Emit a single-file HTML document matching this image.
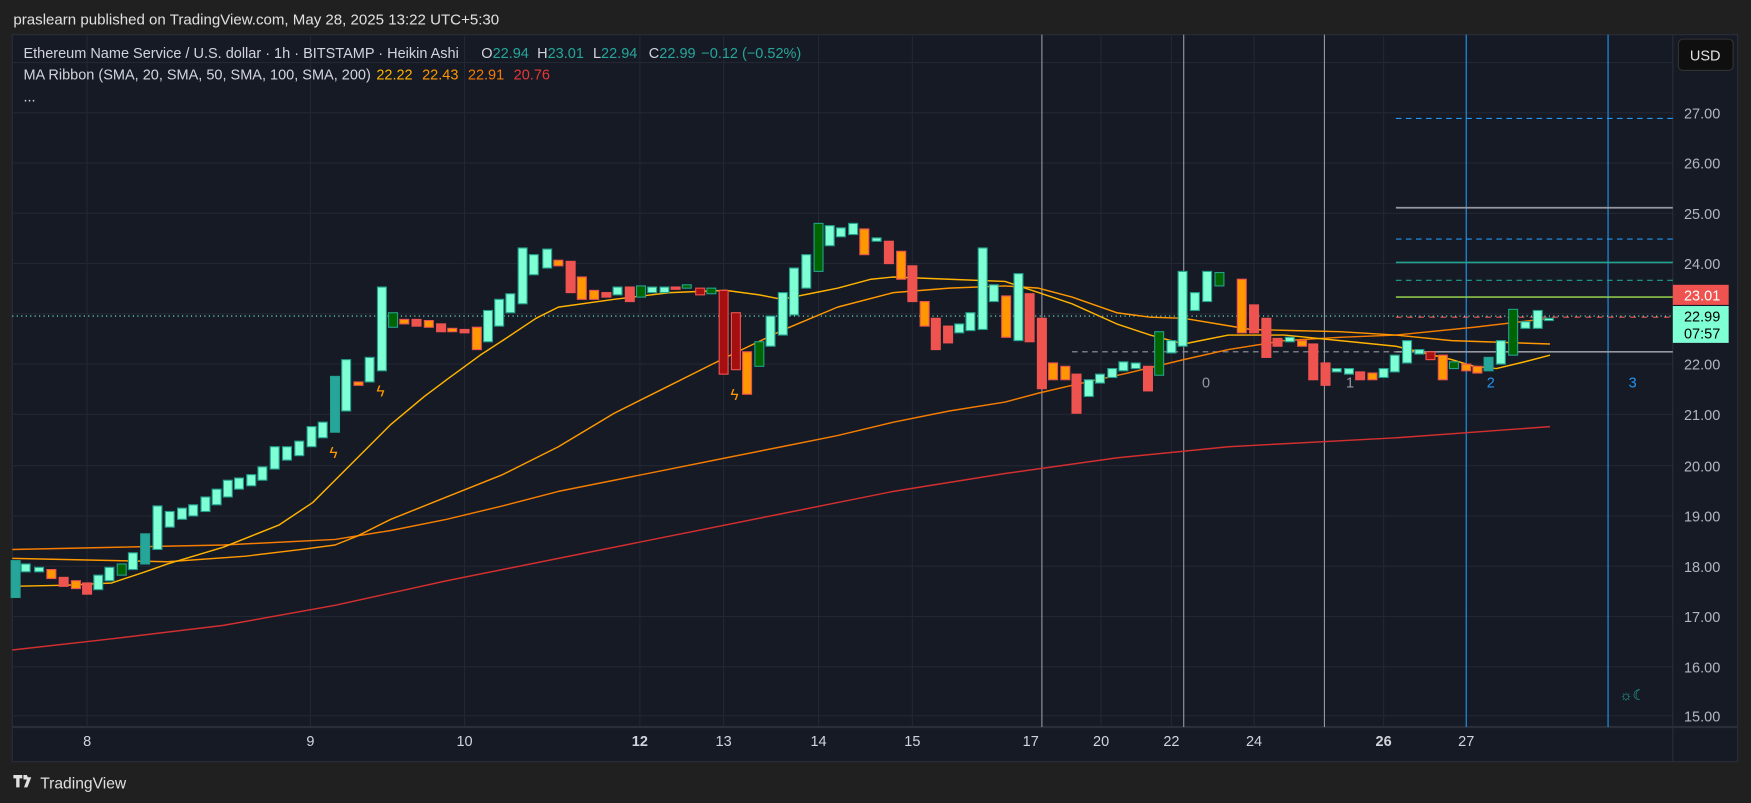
<!DOCTYPE html>
<html><head><meta charset="utf-8"><style>
html,body{margin:0;padding:0;background:#202020;width:1751px;height:803px;overflow:hidden}
svg{display:block}
text{font-family:"Liberation Sans",sans-serif}
.m{fill:#7fffd4;stroke:#22a08c}
.g{fill:#006400;stroke:#22a08c}
.t{fill:#26a69a;stroke:#22a08c}
.r{fill:#ef5350;stroke:#ef5350}
.d{fill:#a50f0f;stroke:#ef5350}
.o{fill:#ff9800;stroke:#ef5350}
rect.m,rect.g,rect.t,rect.r,rect.d,rect.o{stroke-width:1}
.ax{fill:#b2b5be;font-size:13px}
.tl{fill:#d1d4dc;font-size:13px;text-anchor:middle}
</style></head><body>
<svg width="1751" height="803" viewBox="0 0 1568 719" xmlns="http://www.w3.org/2000/svg">
<rect width="1568" height="719" fill="#202020"/>
<text x="12" y="22" fill="#e0e0e0" font-size="13.5">praslearn published on TradingView.com, May 28, 2025 13:22 UTC+5:30</text>
<rect x="11" y="31" width="1545" height="651" fill="#161a25" stroke="#2a2e39"/>
<g stroke="#232733" stroke-width="1">
<line x1="11" y1="56" x2="1498" y2="56"/><line x1="11" y1="101" x2="1498" y2="101"/><line x1="11" y1="146" x2="1498" y2="146"/><line x1="11" y1="191" x2="1498" y2="191"/><line x1="11" y1="236" x2="1498" y2="236"/><line x1="11" y1="281" x2="1498" y2="281"/><line x1="11" y1="326" x2="1498" y2="326"/><line x1="11" y1="371" x2="1498" y2="371"/><line x1="11" y1="417" x2="1498" y2="417"/><line x1="11" y1="462" x2="1498" y2="462"/><line x1="11" y1="507" x2="1498" y2="507"/><line x1="11" y1="552" x2="1498" y2="552"/><line x1="11" y1="597" x2="1498" y2="597"/><line x1="11" y1="641" x2="1498" y2="641"/>
<line x1="78" y1="31" x2="78" y2="651"/><line x1="278" y1="31" x2="278" y2="651"/><line x1="416" y1="31" x2="416" y2="651"/><line x1="573" y1="31" x2="573" y2="651"/><line x1="648" y1="31" x2="648" y2="651"/><line x1="733" y1="31" x2="733" y2="651"/><line x1="817" y1="31" x2="817" y2="651"/><line x1="986" y1="31" x2="986" y2="651"/><line x1="1049" y1="31" x2="1049" y2="651"/><line x1="1123" y1="31" x2="1123" y2="651"/><line x1="1239" y1="31" x2="1239" y2="651"/>
</g>
<line x1="11" y1="651" x2="1556" y2="651" stroke="#2a2e39" stroke-width="2"/>
<line x1="1498" y1="31" x2="1498" y2="682" stroke="#2a2e39"/>
<g stroke-width="1"><line x1="933" y1="31" x2="933" y2="651" stroke="#9598a1"/><line x1="1060" y1="31" x2="1060" y2="651" stroke="#9598a1"/><line x1="1186" y1="31" x2="1186" y2="651" stroke="#9598a1"/><line x1="1313" y1="31" x2="1313" y2="651" stroke="#2196f3"/><line x1="1440" y1="31" x2="1440" y2="651" stroke="#2196f3"/></g>
<text x="1080" y="347" fill="#9598a1" font-size="13" text-anchor="middle">0</text>
<text x="1209" y="347" fill="#9598a1" font-size="13" text-anchor="middle">1</text>
<text x="1335" y="347" fill="#2196f3" font-size="13" text-anchor="middle">2</text>
<text x="1462" y="347" fill="#2196f3" font-size="13" text-anchor="middle">3</text>
<line x1="1250" y1="106" x2="1498" y2="106" stroke="#2196f3" stroke-dasharray="5,4"/>
<line x1="1250" y1="186" x2="1498" y2="186" stroke="#9598a1" stroke-width="1.5"/>
<line x1="1250" y1="214" x2="1498" y2="214" stroke="#2196f3" stroke-dasharray="5,4"/>
<line x1="1250" y1="235" x2="1498" y2="235" stroke="#1fa38f" stroke-width="1.5"/>
<line x1="1250" y1="251" x2="1498" y2="251" stroke="#1fa38f" stroke-dasharray="5,4"/>
<line x1="1250" y1="266" x2="1498" y2="266" stroke="#8bc34a" stroke-width="1.5"/>
<line x1="960" y1="315" x2="1250" y2="315" stroke="#9598a1" stroke-dasharray="5,4"/>
<line x1="1250" y1="315" x2="1498" y2="315" stroke="#9598a1" stroke-width="1.5"/>
<line x1="1250" y1="284" x2="1498" y2="284" stroke="#ef5350" stroke-dasharray="5,5"/>
<line x1="11" y1="283" x2="1498" y2="283" stroke="#7fffd4" stroke-dasharray="1,3"/>
<g fill="none" stroke-width="1.3" stroke-linejoin="round">
<polyline stroke="#d32f2f" points="11,582 100,572 200,560 300,542 400,520 500,500 600,480 700,460 800,440 900,424 1000,410 1100,400 1250,392 1388,382"/>
<polyline stroke="#f57c00" points="11,492 200,488 300,483 350,475 400,465 450,453 500,440 550,430 600,420 650,410 700,400 750,390 800,378 850,368 900,360 930,352 960,345 1010,334 1060,322 1100,313 1150,305 1200,302 1250,300 1320,293 1388,285"/>
<polyline stroke="#ff9800" points="11,500 150,503 220,498 270,492 300,488 320,480 350,465 400,445 450,425 500,400 550,370 600,345 650,320 700,296 750,275 800,262 850,258 900,256 930,258 960,266 1000,280 1030,284 1060,285 1090,290 1120,295 1160,296 1200,297 1250,300 1300,305 1388,308"/>
<polyline stroke="#ffb300" points="11,525 60,524 100,522 130,512 150,505 200,490 250,470 280,450 300,430 330,400 350,380 380,355 400,340 430,318 450,305 480,285 500,275 550,268 600,262 650,260 680,264 700,268 730,262 750,258 780,250 800,248 850,250 900,252 930,262 960,272 1000,290 1030,300 1060,308 1080,304 1100,300 1150,300 1200,305 1250,310 1300,322 1320,328 1340,330 1365,324 1388,318"/>
</g>
<g>
<rect class="t" x="10" y="502" width="8" height="33"/><rect class="m" x="19" y="505" width="8" height="7"/><rect class="m" x="31" y="508" width="8" height="4"/><rect class="o" x="42" y="510" width="8" height="8"/><rect class="r" x="53" y="517" width="8" height="8"/><rect class="o" x="64" y="520" width="8" height="7"/><rect class="r" x="74" y="522" width="8" height="10"/><rect class="m" x="84" y="515" width="8" height="13"/><rect class="m" x="94" y="508" width="8" height="12"/><rect class="g" x="105" y="505" width="8" height="10"/><rect class="m" x="115" y="495" width="8" height="15"/><rect class="t" x="126" y="478" width="8" height="27"/><rect class="m" x="137" y="453" width="8" height="39"/><rect class="m" x="148" y="458" width="8" height="14"/><rect class="m" x="159" y="455" width="8" height="10"/><rect class="m" x="169" y="452" width="8" height="10"/><rect class="m" x="180" y="445" width="8" height="13"/><rect class="m" x="190" y="438" width="8" height="14"/><rect class="m" x="200" y="430" width="8" height="15"/><rect class="m" x="210" y="428" width="8" height="10"/><rect class="m" x="221" y="425" width="8" height="10"/><rect class="m" x="231" y="418" width="8" height="12"/><rect class="m" x="242" y="400" width="8" height="20"/><rect class="m" x="253" y="400" width="8" height="12"/><rect class="m" x="264" y="395" width="8" height="13"/><rect class="m" x="275" y="382" width="8" height="18"/><rect class="m" x="285" y="378" width="8" height="14"/><rect class="t" x="296" y="337" width="8" height="50"/><rect class="m" x="306" y="322" width="8" height="46"/><rect class="o" x="317" y="342" width="8" height="3"/><rect class="m" x="327" y="320" width="8" height="22"/><rect class="m" x="338" y="257" width="8" height="75"/><rect class="g" x="348" y="280" width="8" height="13"/><rect class="o" x="358" y="286" width="8" height="4"/><rect class="r" x="369" y="286" width="8" height="6"/><rect class="o" x="380" y="287" width="8" height="6"/><rect class="r" x="391" y="290" width="8" height="7"/><rect class="o" x="401" y="294" width="8" height="3"/><rect class="r" x="412" y="295" width="8" height="3"/><rect class="o" x="423" y="293" width="8" height="20"/><rect class="m" x="433" y="278" width="8" height="28"/><rect class="m" x="443" y="268" width="8" height="24"/><rect class="m" x="453" y="263" width="8" height="17"/><rect class="m" x="464" y="222" width="8" height="50"/><rect class="m" x="474" y="228" width="8" height="18"/><rect class="m" x="486" y="223" width="8" height="17"/><rect class="o" x="496" y="233" width="8" height="5"/><rect class="r" x="507" y="234" width="8" height="28"/><rect class="o" x="517" y="248" width="8" height="20"/><rect class="o" x="528" y="260" width="8" height="8"/><rect class="r" x="539" y="262" width="8" height="4"/><rect class="m" x="549" y="257" width="8" height="7"/><rect class="r" x="560" y="257" width="8" height="13"/><rect class="g" x="570" y="256" width="8" height="10"/><rect class="m" x="580" y="257" width="8" height="5"/><rect class="m" x="591" y="257" width="8" height="5"/><rect class="r" x="601" y="257" width="8" height="2"/><rect class="g" x="611" y="255" width="8" height="3"/><rect class="d" x="623" y="258" width="8" height="6"/><rect class="g" x="633" y="258" width="8" height="5"/><rect class="d" x="644" y="260" width="8" height="75"/><rect class="d" x="655" y="280" width="8" height="51"/><rect class="o" x="665" y="315" width="8" height="38"/><rect class="g" x="676" y="306" width="8" height="22"/><rect class="m" x="686" y="283" width="8" height="27"/><rect class="m" x="697" y="262" width="8" height="38"/><rect class="m" x="707" y="240" width="8" height="42"/><rect class="m" x="718" y="228" width="8" height="30"/><rect class="g" x="729" y="200" width="8" height="43"/><rect class="m" x="739" y="202" width="8" height="18"/><rect class="m" x="749" y="204" width="8" height="8"/><rect class="m" x="760" y="200" width="8" height="10"/><rect class="o" x="770" y="205" width="8" height="23"/><rect class="m" x="781" y="213" width="8" height="3"/><rect class="r" x="792" y="216" width="8" height="20"/><rect class="o" x="803" y="225" width="8" height="25"/><rect class="r" x="813" y="238" width="8" height="32"/><rect class="o" x="824" y="270" width="8" height="22"/><rect class="r" x="834" y="285" width="8" height="28"/><rect class="r" x="845" y="292" width="8" height="15"/><rect class="m" x="855" y="290" width="8" height="8"/><rect class="m" x="865" y="280" width="8" height="16"/><rect class="m" x="876" y="222" width="8" height="73"/><rect class="m" x="886" y="255" width="8" height="15"/><rect class="o" x="897" y="265" width="8" height="37"/><rect class="m" x="908" y="245" width="8" height="60"/><rect class="r" x="918" y="263" width="8" height="43"/><rect class="r" x="929" y="285" width="8" height="63"/><rect class="o" x="939" y="325" width="8" height="15"/><rect class="o" x="950" y="328" width="8" height="12"/><rect class="r" x="960" y="335" width="8" height="35"/><rect class="m" x="971" y="340" width="8" height="15"/><rect class="m" x="981" y="335" width="8" height="8"/><rect class="m" x="992" y="330" width="8" height="8"/><rect class="m" x="1002" y="324" width="8" height="8"/><rect class="m" x="1013" y="325" width="8" height="5"/><rect class="r" x="1024" y="328" width="8" height="22"/><rect class="g" x="1034" y="297" width="8" height="39"/><rect class="m" x="1045" y="305" width="8" height="11"/><rect class="m" x="1055" y="243" width="8" height="67"/><rect class="m" x="1066" y="262" width="8" height="16"/><rect class="m" x="1077" y="243" width="8" height="27"/><rect class="g" x="1088" y="244" width="8" height="12"/><rect class="o" x="1108" y="250" width="8" height="48"/><rect class="r" x="1119" y="273" width="8" height="25"/><rect class="r" x="1130" y="285" width="8" height="35"/><rect class="r" x="1140" y="303" width="8" height="7"/><rect class="m" x="1151" y="302" width="8" height="4"/><rect class="o" x="1162" y="305" width="8" height="5"/><rect class="r" x="1172" y="308" width="8" height="32"/><rect class="r" x="1183" y="325" width="8" height="20"/><rect class="m" x="1193" y="330" width="8" height="3"/><rect class="m" x="1204" y="330" width="8" height="5"/><rect class="r" x="1214" y="333" width="8" height="7"/><rect class="o" x="1225" y="334" width="8" height="6"/><rect class="m" x="1235" y="330" width="8" height="8"/><rect class="m" x="1245" y="318" width="8" height="15"/><rect class="m" x="1256" y="305" width="8" height="20"/><rect class="m" x="1267" y="313" width="8" height="4"/><rect class="d" x="1277" y="315" width="8" height="7"/><rect class="o" x="1288" y="318" width="8" height="22"/><rect class="g" x="1298" y="324" width="8" height="6"/><rect class="o" x="1309" y="326" width="8" height="6"/><rect class="o" x="1319" y="328" width="8" height="6"/><rect class="t" x="1329" y="320" width="8" height="12"/><rect class="m" x="1340" y="305" width="8" height="21"/><rect class="g" x="1351" y="277" width="8" height="41"/><rect class="m" x="1362" y="288" width="8" height="6"/><rect class="m" x="1373" y="278" width="8" height="16"/><rect class="m" x="1383" y="285" width="8" height="2"/>
</g>
<text x="337" y="355" fill="#ff9800" font-size="14">ϟ</text>
<text x="295" y="410" fill="#ff9800" font-size="14">ϟ</text>
<text x="654" y="358" fill="#ff9800" font-size="14">ϟ</text>
<text x="21" y="52" fill="#d1d4dc" font-size="13">Ethereum Name Service / U.S. dollar · 1h · BITSTAMP · Heikin Ashi</text>
<text x="431" y="52" fill="#d1d4dc" font-size="13">O<tspan fill="#26a69a">22.94</tspan></text>
<text x="481" y="52" fill="#d1d4dc" font-size="13">H<tspan fill="#26a69a">23.01</tspan></text>
<text x="531" y="52" fill="#d1d4dc" font-size="13">L<tspan fill="#26a69a">22.94</tspan></text>
<text x="581" y="52" fill="#d1d4dc" font-size="13">C<tspan fill="#26a69a">22.99</tspan></text>
<text x="628" y="52" fill="#26a69a" font-size="13">−0.12 (−0.52%)</text>
<text x="21" y="71" fill="#d1d4dc" font-size="13">MA Ribbon (SMA, 20, SMA, 50, SMA, 100, SMA, 200)</text>
<text x="337" y="71" fill="#ffb300" font-size="13">22.22</text>
<text x="378" y="71" fill="#ff9800" font-size="13">22.43</text>
<text x="419" y="71" fill="#f57c00" font-size="13">22.91</text>
<text x="460" y="71" fill="#e53935" font-size="13">20.76</text>
<text x="21" y="91" fill="#d1d4dc" font-size="13">...</text>
<rect x="1503" y="35" width="49" height="28" rx="4" fill="#0f0f0f" stroke="#333"/>
<text x="1527" y="54" fill="#e0e0e0" font-size="13" text-anchor="middle">USD</text>
<g><text x="1508" y="106" class="ax">27.00</text><text x="1508" y="151" class="ax">26.00</text><text x="1508" y="196" class="ax">25.00</text><text x="1508" y="241" class="ax">24.00</text><text x="1508" y="331" class="ax">22.00</text><text x="1508" y="376" class="ax">21.00</text><text x="1508" y="422" class="ax">20.00</text><text x="1508" y="467" class="ax">19.00</text><text x="1508" y="512" class="ax">18.00</text><text x="1508" y="557" class="ax">17.00</text><text x="1508" y="602" class="ax">16.00</text><text x="1508" y="646" class="ax">15.00</text></g>
<rect x="1498" y="255" width="50" height="18" fill="#ef5350"/>
<text x="1508" y="269" fill="#fff" font-size="13">23.01</text>
<rect x="1498" y="274" width="50" height="33" fill="#7fffd4"/>
<text x="1508" y="288" fill="#000" font-size="13">22.99</text>
<text x="1508" y="303" fill="#000" font-size="13">07:57</text>
<text x="1450" y="627" fill="#26a69a" font-size="13">☼☾</text>
<g><text x="78" y="668" class="tl">8</text><text x="278" y="668" class="tl">9</text><text x="416" y="668" class="tl">10</text><text x="573" y="668" class="tl" font-weight="bold">12</text><text x="648" y="668" class="tl">13</text><text x="733" y="668" class="tl">14</text><text x="817" y="668" class="tl">15</text><text x="923" y="668" class="tl">17</text><text x="986" y="668" class="tl">20</text><text x="1049" y="668" class="tl">22</text><text x="1123" y="668" class="tl">24</text><text x="1239" y="668" class="tl" font-weight="bold">26</text><text x="1313" y="668" class="tl">27</text></g>
<path d="M12 694h8v3h-2.5v8h-3v-8H12z M21 694h3l1 2h3l-3.5 9h-3l2.6-7H21z" fill="#e0e0e0"/>
<text x="36" y="706" fill="#e0e0e0" font-size="14">TradingView</text>
</svg>
</body></html>
